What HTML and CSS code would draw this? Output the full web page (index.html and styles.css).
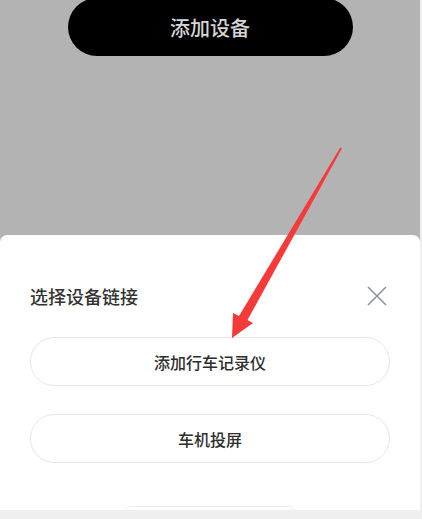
FILE: index.html
```html
<!DOCTYPE html>
<html lang="zh-CN">
<head>
  <meta charset="UTF-8" />
  <meta name="viewport" content="width=device-width, initial-scale=1.0"/>
  <title>选择设备链接</title>
  <link rel="stylesheet" href="styles.css">
</head>
<body>
  <div class="app">
    <div class="backdrop">
      <button class="add-btn">添加设备</button>
    </div>

    <div class="sheet">
      <div class="sheet-head">
        <h3>选择设备链接</h3>
        <svg class="close" viewBox="0 0 20 20" width="20" height="20">
          <path d="M1 1 L19 19 M19 1 L1 19" stroke="#8a929b" stroke-width="1.6" fill="none"/>
        </svg>
      </div>
      <button class="option">添加行车记录仪</button>
      <button class="option">车机投屏</button>
      <div class="peek"></div>
    </div>

    <svg class="arrow" viewBox="0 0 420 510" width="420" height="510">
      <polygon points="340.3,147.5 341.9,148.5 247.5,320 253,323 232,338 233,313 239,316" fill="#f53a3a"/>
    </svg>
  </div>
</body>
</html>
```

FILE: styles.css
```css
body { margin: 0; background: #efefef; font-family: "Noto Sans CJK SC", "Noto Sans", sans-serif; }
.app {
  position: relative;
  width: 420px;
  height: 510px;
  background: #b3b3b3;
  display: flex;
  flex-direction: column;
  overflow: hidden;
}
.backdrop {
  height: 235px;
  display: flex;
  justify-content: center;
}
.add-btn {
  margin-top: -2px;
  width: 285px;
  height: 58px;
  background: #000;
  color: #d6d6d6;
  border: none;
  border-radius: 29px;
  font-family: inherit;
  font-size: 20px;
  font-weight: 500;
}
.sheet {
  flex: 1;
  background: #fff;
  border-radius: 7px 7px 0 0;
  padding: 0 30px;
  overflow: hidden;
}
.sheet-head {
  margin-top: 51px;
  height: 20px;
  display: flex;
  align-items: center;
  justify-content: space-between;
  padding-right: 3px;
}
.sheet-head h3 {
  margin: 0;
  font-size: 18px;
  line-height: 20px;
  font-weight: 500;
  color: #333;
}
.option {
  display: block;
  width: 100%;
  height: 49px;
  margin-top: 31px;
  background: #fff;
  border: 1px solid #e6e6e6;
  border-radius: 25px;
  font-family: inherit;
  font-size: 16px;
  font-weight: 500;
  color: #2e2e2e;
}
.option + .option { margin-top: 28px; }
.peek {
  width: 170px;
  height: 10px;
  margin: 43px auto 0;
  border: 1px solid #ededed;
  border-radius: 5px;
  box-sizing: border-box;
}
.arrow {
  position: absolute;
  left: 0;
  top: 0;
  pointer-events: none;
}
```
